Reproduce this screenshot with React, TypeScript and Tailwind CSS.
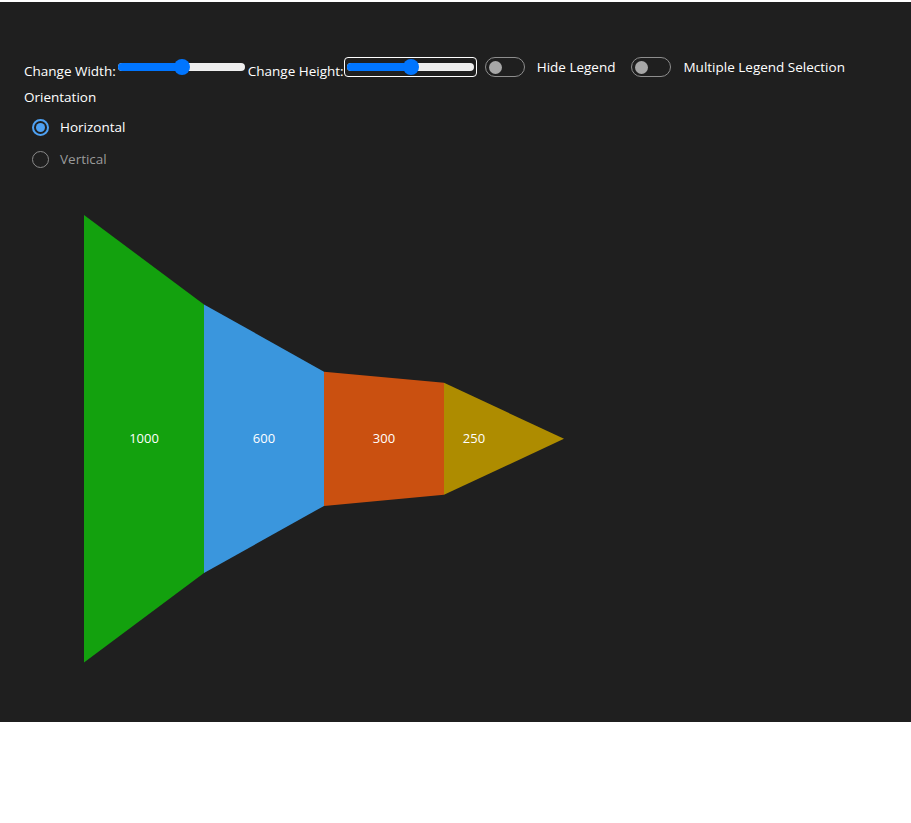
import React from "react";

const font = { fontFamily: '"Open Sans", "Noto Sans", sans-serif' };

function Slider({ width, pos }: { width: number; pos: number }) {
  return (
    <div className="relative h-[16px]" style={{ width }}>
      <div className="absolute left-0 right-0 top-[4px] h-[8px] rounded-full bg-[#efefef]" />
      <div
        className="absolute left-0 top-[4px] h-[8px] rounded-full bg-[#0075ff]"
        style={{ width: pos }}
      />
      <div
        className="absolute top-0 h-[16px] w-[16px] rounded-full bg-[#0075ff]"
        style={{ left: pos - 8 }}
      />
    </div>
  );
}

function Toggle() {
  return (
    <div className="flex h-[20px] w-[40px] items-center rounded-full border border-[#8e8e8e] pl-[3px]">
      <div className="h-[13px] w-[13px] rounded-full bg-[#a7a7a7]" />
    </div>
  );
}

export default function App() {
  const cx0 = 84;
  const step = 120;
  const cy = 438.8 - 175;
  const halves = [223.8, 134.3, 67.1, 56.0, 0];
  const colors = ["#13a10e", "#3a96dd", "#ca5010", "#ae8c00"];
  const labels = ["1000", "600", "300", "250"];
  const labelX = [144, 264, 384, 474];

  return (
    <div className="w-full bg-white pt-[2px]" style={font}>
      <div className="h-[720px] bg-[#1f1f1f] text-white">
        <div className="pl-[24px] pt-[55px] text-[13.5px]">
          <div className="flex h-[20px] items-center">
            <span className="mt-[7px] leading-[20px]">Change Width:</span>
            <div className="ml-[2px]">
              <Slider width={127} pos={64} />
            </div>
            <span className="ml-[3px] mt-[7px] leading-[20px]">Change Height:</span>
            <div className="flex h-[20px] w-[133px] items-center rounded-[4px] border border-white pl-[2px]">
              <Slider width={127} pos={64} />
            </div>
            <div className="ml-[8px]">
              <Toggle />
            </div>
            <span className="ml-[12px] leading-[20px]">Hide Legend</span>
            <div className="ml-[16px]">
              <Toggle />
            </div>
            <span className="ml-[12px] leading-[20px]">Multiple Legend Selection</span>
          </div>
          <div className="mt-[10px] leading-[20px]">Orientation</div>
          <div className="mt-[4px] flex h-[32px] items-center pl-[8px]">
            <div className="flex h-[17px] w-[17px] items-center justify-center rounded-full border-2 border-[#4ea1f3]">
              <div className="h-[9px] w-[9px] rounded-full bg-[#4ea1f3]" />
            </div>
            <span className="ml-[11px] leading-[20px]">Horizontal</span>
          </div>
          <div className="flex h-[32px] items-center pl-[8px]">
            <div className="h-[17px] w-[17px] rounded-full border-[1.5px] border-[#8a8a8a]" />
            <span className="ml-[11px] leading-[20px] text-[#9a9a9a]">Vertical</span>
          </div>
        </div>
        <svg width="911" height="545" className="block">
          {colors.map((c, i) => {
            const x1 = cx0 + i * step;
            const x2 = x1 + step;
            const h1 = halves[i];
            const h2 = halves[i + 1];
            const pts =
              h2 === 0
                ? `${x1},${cy - h1} ${x2},${cy} ${x1},${cy + h1}`
                : `${x1},${cy - h1} ${x2},${cy - h2} ${x2},${cy + h2} ${x1},${cy + h1}`;
            return <polygon key={i} points={pts} fill={c} />;
          })}
          {labels.map((l, i) => (
            <text
              key={l}
              x={labelX[i]}
              y={cy - 1}
              fill="white"
              fontSize="13"
              textAnchor="middle"
              dominantBaseline="central"
              style={font}
            >
              {l}
            </text>
          ))}
        </svg>
      </div>
    </div>
  );
}
